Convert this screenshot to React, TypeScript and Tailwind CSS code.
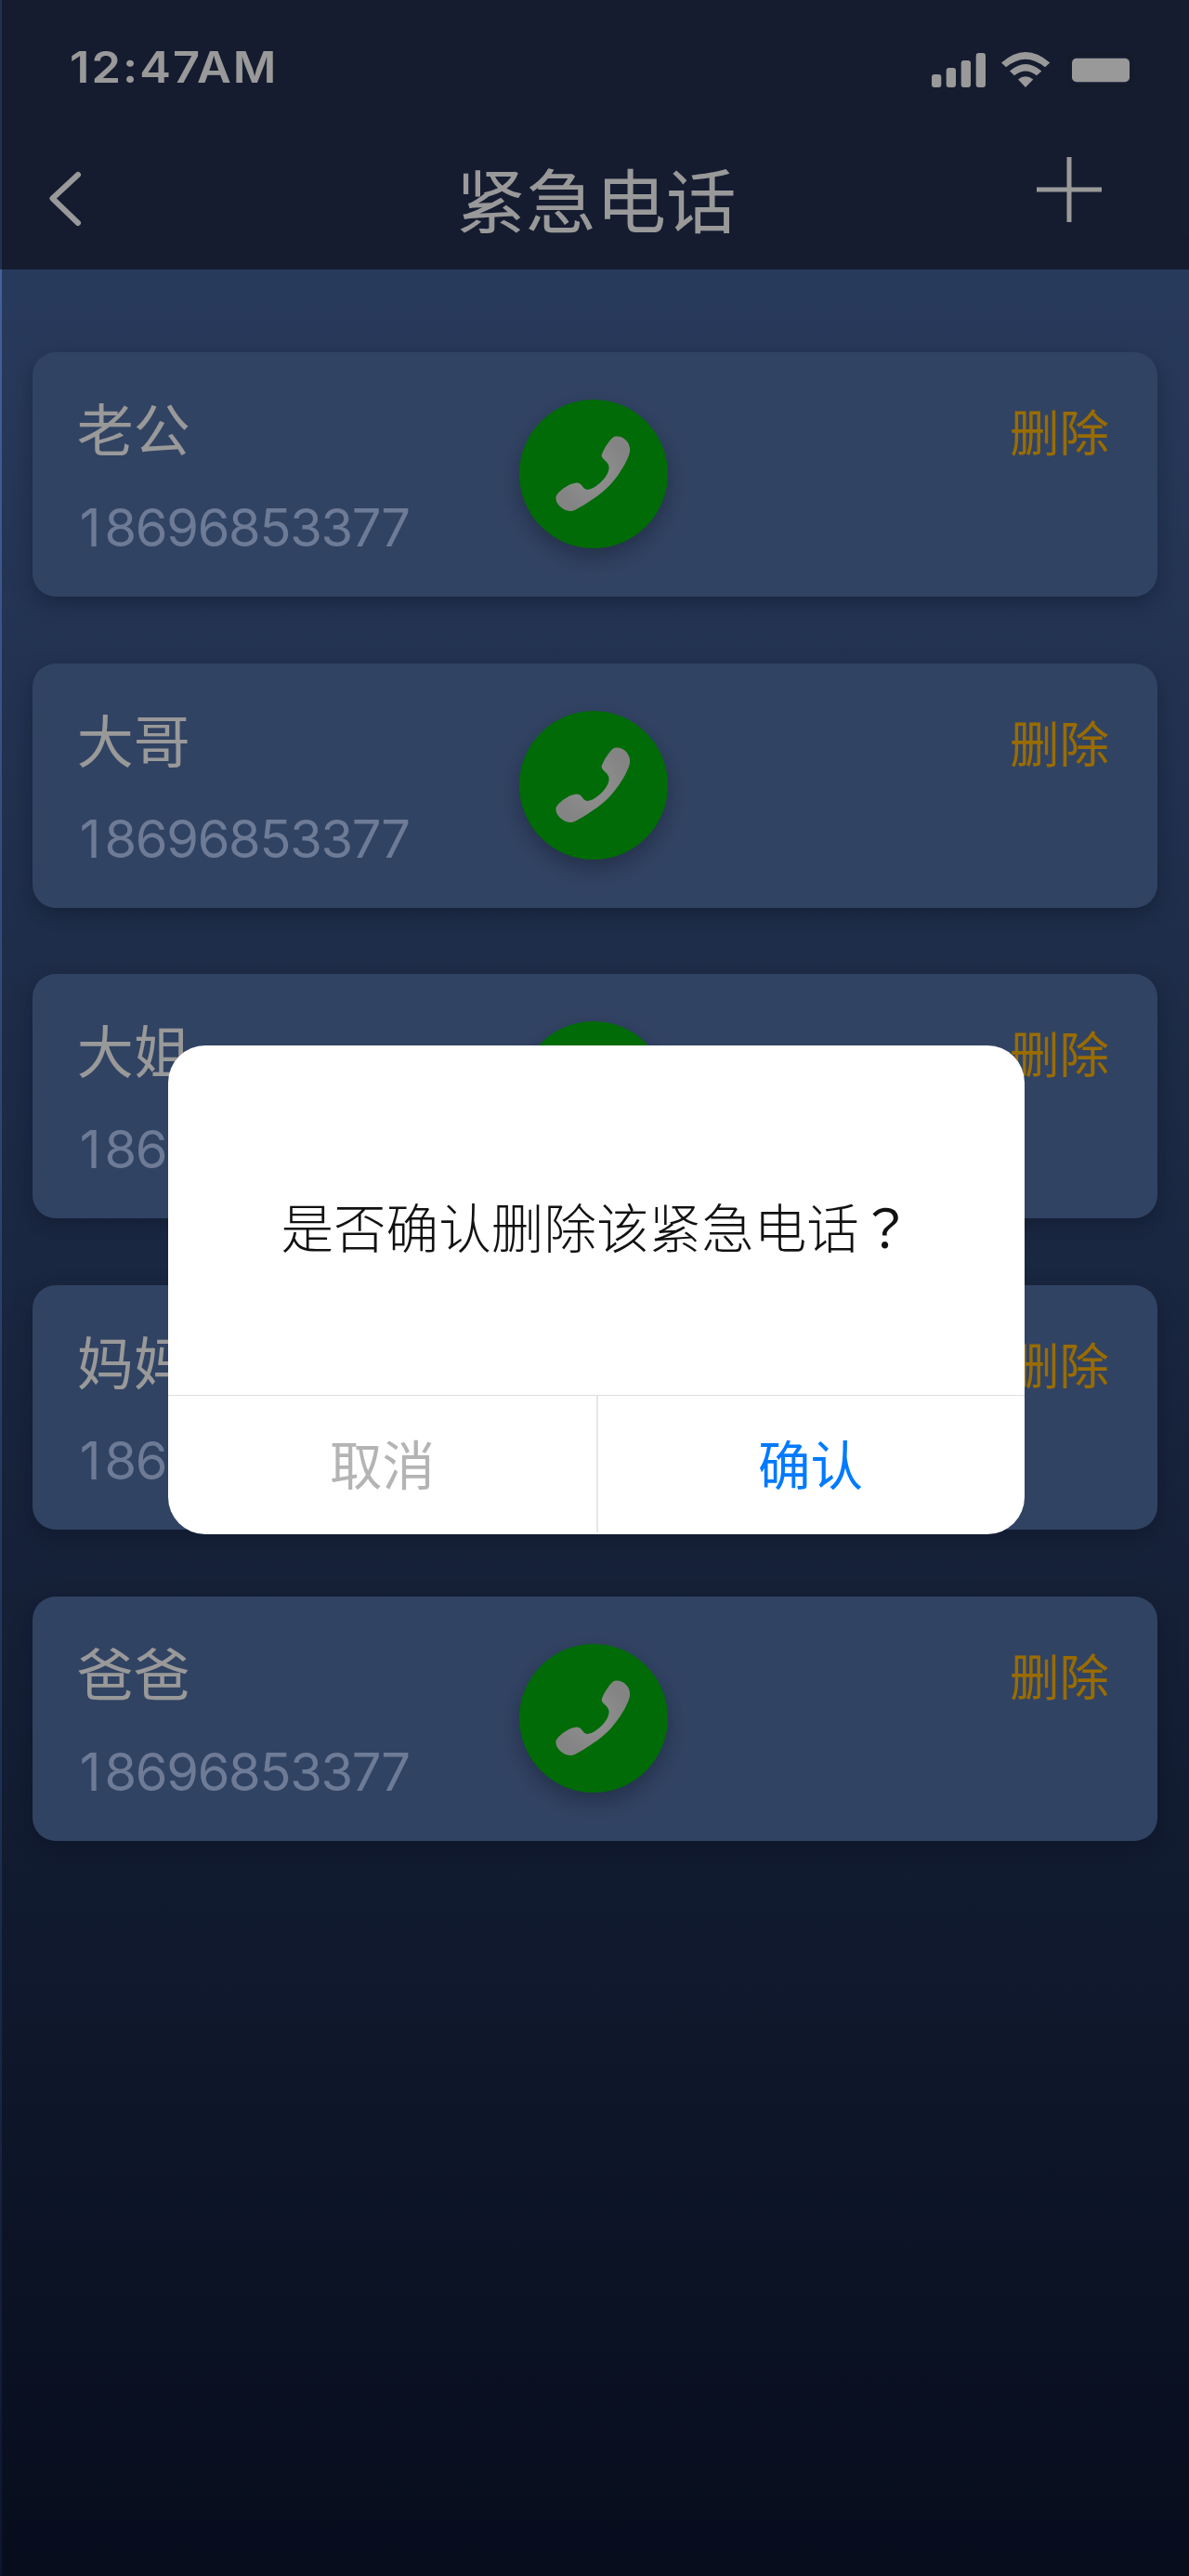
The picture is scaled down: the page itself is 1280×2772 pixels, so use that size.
const contacts = [
  { name: '老公', phone: '18696853377' },
  { name: '大哥', phone: '18696853377' },
  { name: '大姐', phone: '18696853377' },
  { name: '妈妈', phone: '18696853377' },
  { name: '爸爸', phone: '18696853377' },
];

function StatusIcons() {
  return (
    <svg className="block h-10 w-[226px]" viewBox="1000 55 226 40" fill="#fff">
      <rect x="1003" y="80" width="10.3" height="14" rx="3" />
      <rect x="1018.7" y="73" width="10.3" height="21" rx="3" />
      <rect x="1034.7" y="65" width="10.3" height="29" rx="3" />
      <rect x="1050.7" y="57" width="10.3" height="37" rx="3" />
      <path d="M1078 67.500Q1104 44.500 1130.300 67.500L1125 72.300Q1104 55 1083 72.300Z" />
      <path d="M1087 76.500Q1104 61.500 1121.300 76.500L1116 81.300Q1104 71.500 1092 81.300Z" />
      <path d="M1096 85.500Q1104 79 1112.300 85.500L1104 94Z" />
      <rect x="1154" y="62.700" width="62" height="25.600" rx="5" />
      <rect x="1150" y="58.500" width="70" height="34" rx="8" fill="none" stroke="#212d45" strokeWidth="2.500" />
    </svg>
  );
}

function CallButton() {
  return (
    <button className="mt-[51px] size-40 rounded-full bg-[#00b20d] shadow-[0_10px_22px_rgba(20,25,50,0.35)]">
      <svg className="block size-40" viewBox="118 91 482 482">
        <defs>
          <radialGradient id="handset">
            <stop offset="0" stopColor="#f3f3f3" />
            <stop offset="1" stopColor="#dcdcdc" />
          </radialGradient>
        </defs>
        <path
          fill="url(#handset)"
          d="M435 210C457 210 478 230 477 256C475 280 445 333 412 368C378 403 333 430 302 447C285 457 266 452 252 439C240 428 236 418 237 406C240 392 275 364 300 361C324 359 321 381 338 383C362 383 410 342 409 310C408 291 385 286 385 272C387 260 404 230 420 215C425 211 430 210 435 210Z"
        />
      </svg>
    </button>
  );
}

function ContactCard({ name, phone }: { name: string; phone: string }) {
  return (
    <li className="grid h-[263px] grid-cols-[1fr_160px_1fr] items-start rounded-[25px] bg-[#5370a5] pr-[2px] shadow-[0_8px_22px_rgba(10,20,45,0.34)]">
      <div className="pl-[48px]">
        <div className="mt-[51px] text-[61px] leading-[60px] font-normal text-white">{name}</div>
        <div className="mt-[48px] ml-[3px] font-[Inter,sans-serif] text-[56px] leading-[60px] font-normal tracking-[-1.300px] text-[#b7cdfa] first-letter:tracking-[4px]">
          {phone}
        </div>
      </div>
      <CallButton />
      <button className="mt-[54px] mr-[50px] justify-self-end text-[53.5px] leading-[60px] text-[#ffb400]">删除</button>
    </li>
  );
}

function ConfirmDialog() {
  return (
    <div
      role="dialog"
      className="absolute top-[1125px] left-[181px] flex h-[526px] w-[922px] flex-col overflow-hidden rounded-[40px] bg-white"
    >
      <p className="flex-1 pt-[163px] text-center text-[56.6px] leading-[60px] font-light whitespace-nowrap text-[#111]">
        是否确认删除该紧急电话
        <span lang="zh-TW" className="font-['Noto_Sans_CJK_TC',sans-serif] font-normal">？</span>
      </p>
      <div className="flex h-[150px] border-t border-[#dedede] pb-[2px] text-[56.5px]">
        <button className="w-[461px] pb-[5px] leading-[120px] text-[#b4b4b4]">取消</button>
        <div className="w-[2px] bg-[#e6e6e6]" />
        <button className="flex-1 pr-[2px] pb-[5px] leading-[120px] text-[#007aff]">确认</button>
      </div>
    </div>
  );
}

export default function App() {
  return (
    <div className="relative h-[2772px] w-[1280px] overflow-hidden bg-[linear-gradient(180deg,#44629a_290px,#0c1630_2772px)] font-['Noto_Sans_CJK_SC',sans-serif]">
      <header className="h-[290px] bg-[#233050] text-white">
        <div className="flex items-start justify-between pt-[42px] pr-[54px] pl-[75px]">
          <span className="inline-block origin-left scale-x-110 font-[Inter,sans-serif] text-[46px] leading-[60px] font-semibold tracking-[1.900px]">
            12:47AM
          </span>
          <div className="pt-[13px]">
            <StatusIcons />
          </div>
        </div>
        <div className="grid grid-cols-[1fr_auto_1fr] items-start pt-[60px] pr-[94px] pl-[50px]">
          <svg className="mt-[20px] h-[64px] w-[40px]" viewBox="50 182 40 64" fill="none" stroke="#fff" strokeWidth="6" strokeLinecap="round" strokeLinejoin="round">
            <path d="M84 188L56.500 213.500L84 240" />
          </svg>
          <h1 className="mr-[-47px] text-[75.5px] leading-[100px] font-normal">紧急电话</h1>
          <svg className="mt-[7px] size-[70px] justify-self-end" viewBox="0 0 70 70" stroke="#fff" strokeWidth="5">
            <path d="M0 35H70M35 0V70" />
          </svg>
        </div>
      </header>
      <ul className="flex flex-col gap-[71.7px] pt-[89px] pr-[34px] pl-[34.700px]">
        {contacts.map((c) => (
          <ContactCard key={c.name} {...c} />
        ))}
      </ul>
      <div className="absolute inset-y-0 right-0 left-[2px] bg-black/40" />
      <ConfirmDialog />
    </div>
  );
}
